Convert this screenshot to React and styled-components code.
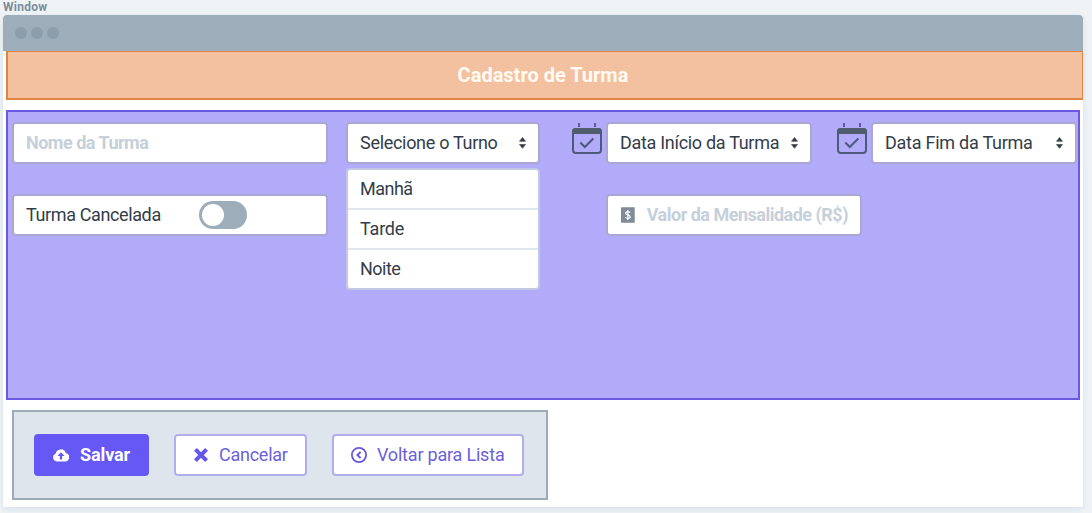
import React from "react";
import styled, { createGlobalStyle } from "styled-components";

const GlobalStyle = createGlobalStyle`
  * { box-sizing: border-box; }
  body {
    margin: 0;
    background: #eff3f6;
    font-family: Roboto, "Liberation Sans", sans-serif;
    color: #323d49;
  }
`;

const Page = styled.div`
  height: 513px;
  padding-left: 3px;
  overflow: hidden;
`;

const Caption = styled.div`
  height: 15px;
  font-size: 12px;
  font-weight: 700;
  line-height: 15px;
  letter-spacing: 0.25px;
  color: #7b8d9b;
`;

const Window = styled.section`
  width: 1080px;
  height: 492px;
  background: #fff;
  border-radius: 4px 4px 2px 2px;
  overflow: hidden;
  box-shadow: 0 2px 6px rgba(120, 140, 160, 0.18);
`;

const TitleBar = styled.div`
  display: flex;
  align-items: center;
  gap: 4px;
  height: 36px;
  padding-left: 12px;
  background: #9dadb9;
`;

const Dot = styled.span`
  width: 12px;
  height: 12px;
  border-radius: 50%;
  background: #8c9dab;
`;

const Header = styled.header`
  display: flex;
  align-items: center;
  justify-content: center;
  height: 49px;
  margin-left: 3px;
  padding-right: 4px;
  border: 2px solid #df8543;
  border-top-width: 1px;
  border-right-width: 1px;
  background: #f3c1a0;
`;

const Text = styled.span`
  font-size: ${(p) => p.$size || 18}px;
  font-weight: ${(p) => p.$weight || 400};
  letter-spacing: ${(p) => p.$track || 0}px;
  line-height: 24px;
  white-space: nowrap;
  color: ${(p) => p.$color || "inherit"};
`;

const Panel = styled.main`
  display: flex;
  flex-direction: column;
  gap: 30px;
  width: 1074px;
  height: 290px;
  margin: 10px 0 0 3px;
  padding: 10px 0 0 4px;
  border: 2px solid #6a5ae2;
  background: #b2abfa;
`;

const Row = styled.div`
  display: flex;
  align-items: flex-start;
`;

const Field = styled.div`
  display: flex;
  align-items: center;
  width: ${(p) => p.$width}px;
  height: 42px;
  margin-left: ${(p) => p.$gap || 0}px;
  padding: 0 12px;
  border: 2px solid #aaa7d3;
  border-radius: 4px;
  background: #fff;
`;

const IconField = styled(Field)`
  gap: 12px;
  padding-left: 13px;
`;

const SelectField = styled(Field)`
  justify-content: space-between;
  padding-right: 12px;
`;

const Dropdown = styled.div`
  position: relative;
  margin-left: 18px;
`;

const Menu = styled.ul`
  position: absolute;
  top: 46px;
  left: 0;
  width: 194px;
  margin: 0;
  padding: 0;
  list-style: none;
  border: 2px solid #c2c7e3;
  border-radius: 4px;
  background: #fff;
`;

const MenuItem = styled.li`
  display: flex;
  align-items: center;
  height: 40px;
  padding-left: 12px;
  border-bottom: 2px solid #dfe6ed;
  &:last-child { height: 38px; border-bottom: 0; }
`;

const DateGroup = styled.div`
  display: flex;
  gap: 4px;
  margin-left: ${(p) => p.$gap}px;
`;

const Switch = styled.span`
  width: 48px;
  height: 28px;
  margin-left: auto;
  margin-right: 67px;
  padding: 3px;
  border-radius: 14px;
  background: #9dadb9;
`;

const Knob = styled.span`
  display: block;
  width: 22px;
  height: 22px;
  border-radius: 50%;
  background: #fff;
`;

const Actions = styled.footer`
  display: flex;
  align-items: center;
  gap: 25px;
  width: 536px;
  height: 90px;
  margin: 10px 0 0 9px;
  padding-left: 20px;
  border: 2px solid #9dadb7;
  background: #dfe5ed;
`;

const Button = styled.button`
  display: flex;
  align-items: center;
  gap: ${(p) => p.$gap}px;
  width: ${(p) => p.$width}px;
  height: 42px;
  padding: 0 0 0 ${(p) => p.$pad}px;
  border: 2px solid ${(p) => (p.$primary ? "#6558f5" : "#b2aeee")};
  border-radius: 4px;
  background: ${(p) => (p.$primary ? "#6558f5" : "#fff")};
  color: ${(p) => (p.$primary ? "#fff" : "#6c5fdc")};
  font-family: inherit;
`;

const Arrows = () => (
  <svg width="7" height="12" viewBox="0 0 7 12" fill="#323d49">
    <path d="M3.5 0.5 6.5 4.3H0.5ZM3.5 11.3 0.5 7.5H6.5Z" stroke="#323d49" strokeWidth=".6" strokeLinejoin="round" />
  </svg>
);

const CalendarIcon = () => (
  <svg width="31" height="33" viewBox="0 0 31 33" fill="none">
    <path d="M8 1V5M24 1V5" stroke="#584f8f" strokeWidth="1.8" />
    <rect x="2" y="7" width="28" height="24" rx="3" stroke="#50597b" strokeWidth="2" />
    <path d="M1 12V9.5Q1 6 4.5 6H27.5Q31 6 31 9.5V12Z" fill="#4f5d6d" />
    <path d="M9.3 20.5 13.8 25 22.3 16.5" stroke="#50597b" strokeWidth="2" />
  </svg>
);

const MoneyIcon = () => (
  <svg width="14" height="16" viewBox="0 0 14 16">
    <rect width="14" height="16" rx="0.6" fill="#7f8b97" />
    <path d="M9.4 5.6C8.8 4.8 8 4.5 7 4.5 5.7 4.5 4.8 5.1 4.8 6.1 4.8 8.4 9.4 7.2 9.4 9.8 9.4 10.9 8.4 11.5 7 11.5 5.9 11.5 5 11.1 4.5 10.3M7 3V13" fill="none" stroke="#fff" strokeWidth="1.2" />
  </svg>
);

const CloudIcon = () => (
  <svg width="16" height="14" viewBox="0 0 16 14">
    <path d="M4 13.4A4 4 0 0 1 2.6 5.7 5.3 5.3 0 0 1 12.8 4.9 4.3 4.3 0 0 1 12 13.4Z" fill="#fff" />
    <path d="M8 4.2 11.6 8H9.1V11.4H6.9V8H4.4Z" fill="#6558f5" />
  </svg>
);

const CloseIcon = () => (
  <svg width="14" height="14" viewBox="0 0 14 14">
    <path d="M1.4 1.4 12.6 12.6M12.6 1.4 1.4 12.6" stroke="#6558e8" strokeWidth="4" />
  </svg>
);

const BackIcon = () => (
  <svg width="16" height="16" viewBox="0 0 16 16" fill="none" stroke="#6558e0">
    <circle cx="8" cy="8" r="7.1" strokeWidth="1.8" />
    <path d="M9.6 4.9 6.5 8 9.6 11.1" strokeWidth="2" />
  </svg>
);

export default function App() {
  return (
    <Page>
      <GlobalStyle />
      <Caption>Window</Caption>
      <Window>
        <TitleBar>
          <Dot />
          <Dot />
          <Dot />
        </TitleBar>
        <Header>
          <Text $size={20} $weight={700} $color="#fffaf2">Cadastro de Turma</Text>
        </Header>
        <Panel>
          <Row>
            <Field $width={316}>
              <Text $weight={700} $track={-0.5} $color="#c6d0da">Nome da Turma</Text>
            </Field>
            <Dropdown>
              <SelectField $width={194}>
                <Text $track={-0.3}>Selecione o Turno</Text>
                <Arrows />
              </SelectField>
              <Menu>
                <MenuItem><Text $track={-0.5}>Manhã</Text></MenuItem>
                <MenuItem><Text $track={-0.2}>Tarde</Text></MenuItem>
                <MenuItem><Text $track={-0.5}>Noite</Text></MenuItem>
              </Menu>
            </Dropdown>
            <DateGroup $gap={31}>
              <CalendarIcon />
              <SelectField $width={206}>
                <Text $track={-0.3}>Data Início da Turma</Text>
                <Arrows />
              </SelectField>
            </DateGroup>
            <DateGroup $gap={24}>
              <CalendarIcon />
              <SelectField $width={206}>
                <Text $track={-0.25}>Data Fim da Turma</Text>
                <Arrows />
              </SelectField>
            </DateGroup>
          </Row>
          <Row>
            <Field $width={316}>
              <Text $track={-0.38}>Turma Cancelada</Text>
              <Switch><Knob /></Switch>
            </Field>
            <IconField $width={256} $gap={278}>
              <MoneyIcon />
              <Text $weight={700} $track={-0.5} $color="#c6d0da">Valor da Mensalidade (R$)</Text>
            </IconField>
          </Row>
        </Panel>
        <Actions>
          <Button $primary $width={115} $pad={17} $gap={11}>
            <CloudIcon />
            <Text $weight={700} $track={-0.1}>Salvar</Text>
          </Button>
          <Button $width={133} $pad={18} $gap={11}>
            <CloseIcon />
            <Text $track={-0.25}>Cancelar</Text>
          </Button>
          <Button $width={192} $pad={17} $gap={10}>
            <BackIcon />
            <Text $track={-0.2}>Voltar para Lista</Text>
          </Button>
        </Actions>
      </Window>
    </Page>
  );
}
